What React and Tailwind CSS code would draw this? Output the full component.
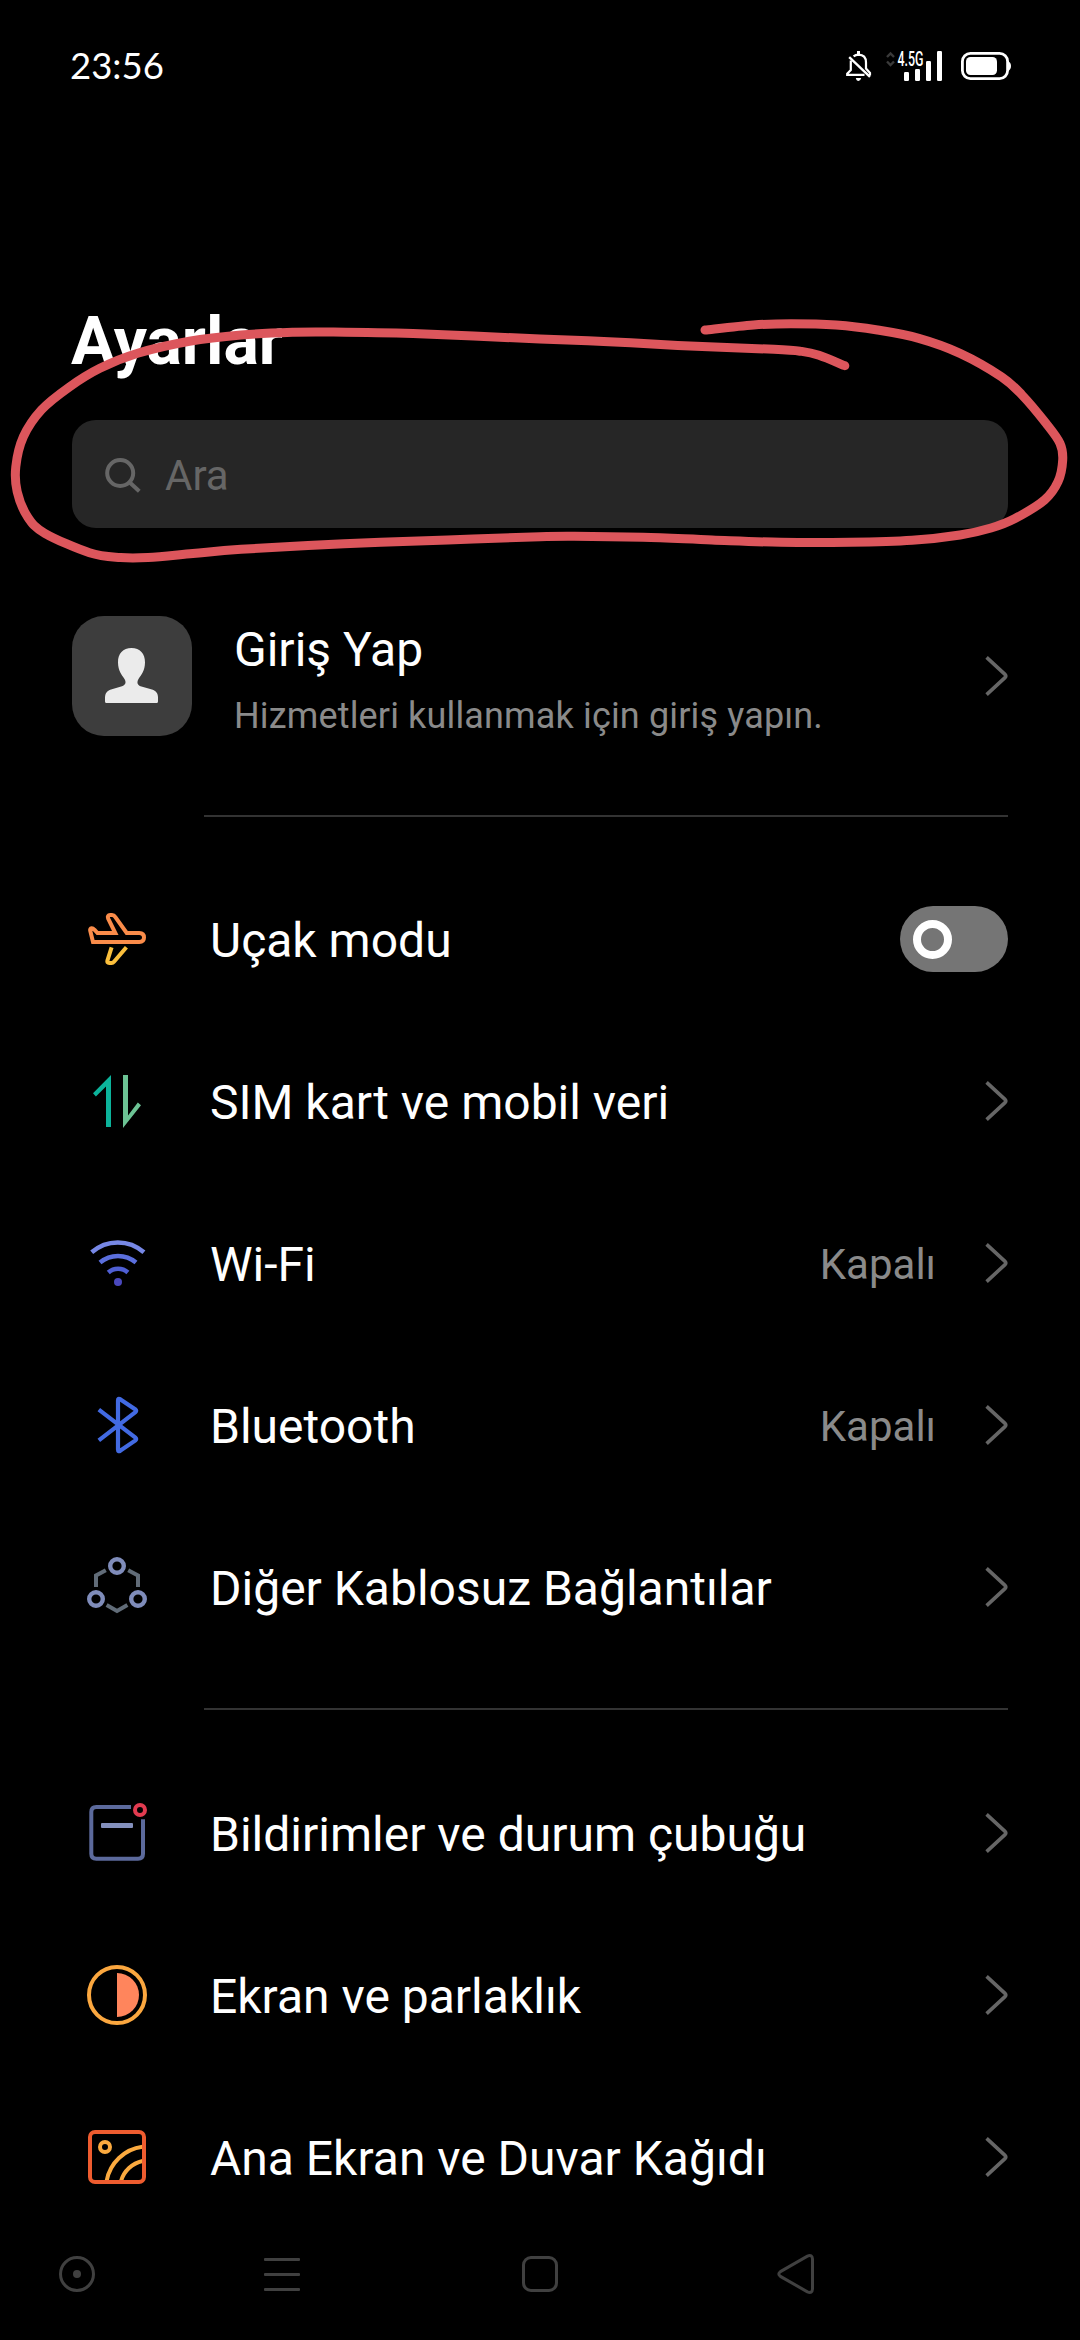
import { useState } from 'react'

// Points of the marker stroke, in drawing order
const markerPoints = [
  [705, 330], [753.5, 325], [791, 323.7], [836, 325], [877.5, 330], [918.8, 338.3], [960, 353.3],
  [1001.4, 376.7], [1022, 395], [1046, 423.3], [1060, 443.3], [1062.7, 460], [1058, 481.7], [1044.5, 500],
  [1015, 518.5], [991, 528], [960, 535], [912, 540.3], [850, 542.3], [781, 542.3], [712, 540], [643, 537.3],
  [574.4, 536.2], [540, 536.7], [447.7, 540], [344, 543.7], [241, 549.3], [192.8, 553.6], [148, 557.5],
  [120.5, 557.5], [89.5, 552.7], [44.8, 533.3], [27.5, 516.7], [17.2, 491.7], [15.8, 466.7], [23.4, 436.7],
  [41.3, 410], [68.9, 387.3], [99.9, 368.3], [137.7, 353.3], [189.4, 341.3], [241, 335], [292.7, 332.3],
  [327, 332], [413, 333.6], [540, 339], [608.9, 341.7], [677.7, 345.4], [774, 349.3], [801.7, 351.4],
  [819, 355.3], [844.8, 365.7],
]

// Catmull-Rom through the points, written as cubic beziers
function smoothPath(pts) {
  let d = `M${pts[0][0]} ${pts[0][1]}`
  for (let i = 0; i < pts.length - 1; i++) {
    const p0 = pts[i - 1] || pts[i]
    const p1 = pts[i]
    const p2 = pts[i + 1]
    const p3 = pts[i + 2] || p2
    d += `C${p1[0] + (p2[0] - p0[0]) / 6} ${p1[1] + (p2[1] - p0[1]) / 6} ${p2[0] - (p3[0] - p1[0]) / 6} ${p2[1] - (p3[1] - p1[1]) / 6} ${p2[0]} ${p2[1]}`
  }
  return d
}

function RowIcon({ children }) {
  return (
    <svg className="w-[60px] h-[60px] shrink-0" viewBox="0 0 60 60" fill="none" strokeWidth="4">
      {children}
    </svg>
  )
}

const AirplaneIcon = () => (
  <RowIcon>
    <path
      d="M6 33L3.2 21.6Q2.8 19.4 4.6 19.2Q6 19.1 7.4 20.7L10.5 24H28.3L21.1 9.4Q20 6.2 23.2 6H25Q27 6 28.2 7.8L39.7 24H52.3Q57 24 57 28.6Q57 33 52.3 33Z"
      stroke="#fa8c4a"
    />
    <path d="M24.6 38.3L20.4 51.6Q19.8 54 22.2 54H24.6Q26 54 27 52.8L39.4 38.3" stroke="#fbbf3c" />
  </RowIcon>
)

const DataIcon = () => (
  <RowIcon>
    <polygon points="24,4 24,56 19,56 19,15.5 8.9,25.6 6,22.3" fill="#0cb39b" />
    <polygon points="36,4 41,4 41,44.5 50.8,31.5 54,34.2 36,57" fill="#6cc394" />
  </RowIcon>
)

const WifiIcon = () => (
  <RowIcon>
    <path d="M4.7 19.3A39.4 39.4 0 0 1 56.9 19.3" stroke="#7788e6" strokeWidth="4.5" />
    <path d="M13 29.5A28 28 0 0 1 49 29.5" stroke="#5b6fdd" strokeWidth="4.5" />
    <path d="M21.3 39.5A14.5 14.5 0 0 1 40.9 39.5" stroke="#4f5fd4" strokeWidth="4.5" />
    <circle cx="31" cy="49" r="4" fill="#4a48bd" />
  </RowIcon>
)

const BluetoothIcon = () => (
  <RowIcon>
    <path
      d="M11.8 14.6L48.4 42.6Q50 44 48.4 45.4L33.2 55.8Q31 57 31 54.6V5.4Q31 3 33.2 4.2L48.4 14.4Q50 15.8 48.4 17.2L11.8 45.4"
      stroke="#426ae2"
      strokeWidth="4.2"
    />
  </RowIcon>
)

const ConnectionsIcon = () => (
  <RowIcon>
    <path d="M18.8 13.2L9 18.4V30M41.2 13.2L51 18.4V30M19.6 48L30 54L40.4 48" stroke="#616c78" />
    <g stroke="#7f8cba" strokeWidth="4.4">
      <circle cx="30" cy="9" r="6.8" />
      <circle cx="9" cy="42" r="6.8" />
      <circle cx="51" cy="42" r="6.8" />
    </g>
  </RowIcon>
)

const NotificationIcon = () => (
  <RowIcon>
    <path d="M44 4H9.3Q4.3 4 4.3 9V50.7Q4.3 55.7 9.3 55.7H51Q56 55.7 56 50.7V16.3" stroke="#5c6a9c" />
    <rect x="14" y="20" width="32" height="5" rx="1" fill="#8490bd" />
    <circle cx="53" cy="7" r="5" stroke="#e23b50" />
  </RowIcon>
)

const BrightnessIcon = () => (
  <RowIcon>
    <circle cx="30" cy="30" r="28" stroke="#fba73f" />
    <path d="M30 8A22 22 0 0 1 30 52Z" fill="#ff855c" />
  </RowIcon>
)

const WallpaperIcon = () => (
  <RowIcon>
    <path d="M19.6 54A42 42 0 0 1 55.5 19.8M34 54A29 29 0 0 1 55.5 34" stroke="#fbaa3f" />
    <circle cx="18" cy="20" r="5" stroke="#fbaa3f" />
    <rect x="3" y="5" width="54" height="50" rx="5" stroke="#ee5c2f" />
  </RowIcon>
)

const Chevron = () => (
  <svg className="w-6 h-[42px] shrink-0" viewBox="0 0 24 42" fill="none">
    <path d="M2.6 2.4L21 19.4Q22.7 21 21 22.6L2.6 39.6" stroke="#666666" strokeWidth="3.6" />
  </svg>
)

function Toggle() {
  const [on, setOn] = useState(false)
  return (
    <button
      onClick={() => setOn(!on)}
      className={`flex items-center w-[108px] h-[66px] rounded-full bg-[#757575] px-[13px] ${on ? 'justify-end' : 'justify-start'}`}
    >
      <span className="w-[39px] h-[39px] rounded-full border-8 border-white" />
    </button>
  )
}

function Row({ icon: Icon, label, value, toggle }) {
  return (
    <div className="flex items-center h-[162px] pl-[87px] pr-[72px]">
      <Icon />
      <span className="ml-[63px] pt-[3px] flex-1 text-5xl leading-[56px] whitespace-nowrap">{label}</span>
      {value && <span className="mr-12 pt-[3px] text-[42px] leading-[50px] text-[#8a8a8a]">{value}</span>}
      {toggle ? <Toggle /> : <Chevron />}
    </div>
  )
}

const Divider = () => <div className="ml-[204px] mr-[72px] h-0.5 shrink-0 bg-[#333333]" />

const connectionRows = [
  { icon: AirplaneIcon, label: 'Uçak modu', toggle: true },
  { icon: DataIcon, label: 'SIM kart ve mobil veri' },
  { icon: WifiIcon, label: 'Wi-Fi', value: 'Kapalı' },
  { icon: BluetoothIcon, label: 'Bluetooth', value: 'Kapalı' },
  { icon: ConnectionsIcon, label: 'Diğer Kablosuz Bağlantılar' },
]

const displayRows = [
  { icon: NotificationIcon, label: 'Bildirimler ve durum çubuğu' },
  { icon: BrightnessIcon, label: 'Ekran ve parlaklık' },
  { icon: WallpaperIcon, label: 'Ana Ekran ve Duvar Kağıdı' },
]

function StatusBar() {
  return (
    <header className="flex items-center h-[132px] shrink-0 pl-[70px] pr-[69px]">
      <span className="flex-1 pb-0.5 font-['Lato',sans-serif] text-[36.500px] leading-[44px]">23:56</span>
      <svg className="w-[26px] h-[30px]" viewBox="0 0 26 30" fill="none" stroke="#fff" strokeWidth="2.2">
        <path d="M7.6 5.4Q9.6 3.6 12.5 3.6Q20 3.8 20 11.5V17.5L24 22V24.6M4.8 9.5V19L1.2 22.6V23.8H18.5" />
        <path d="M3.2 6.2L24 25.8" strokeWidth="2.4" />
        <path d="M12.5 0V4" strokeWidth="3" />
        <path d="M9.8 27H15.2Q14.6 30 12.5 30Q10.4 30 9.8 27Z" fill="#fff" stroke="none" />
      </svg>
      <svg className="ml-3.5 w-14 h-[42px]" viewBox="0 -6 56 42">
        <path d="M1 6L4.5 2.4L8 6M1 10.5L4.5 14L8 10.5" fill="none" stroke="#3a3a3a" strokeWidth="2.4" />
        <text x="11.5" y="15" textLength="26" lengthAdjust="spacingAndGlyphs" className="font-['Roboto',sans-serif] text-[19.500px] font-medium" fill="#fff">
          4.5G
        </text>
        <g fill="#fff">
          <rect x="18" y="21" width="5" height="9" rx="1.2" />
          <rect x="29" y="18" width="5" height="12" rx="1.2" />
          <rect x="40" y="10" width="5" height="20" rx="1.2" />
          <rect x="51" y="0" width="5" height="30" rx="1.2" />
        </g>
      </svg>
      <svg className="ml-[19px] w-[50px] h-7" viewBox="0 0 50 28">
        <rect x="1.4" y="1.4" width="45.2" height="25.2" rx="8" fill="none" stroke="#fff" strokeWidth="2.8" />
        <rect x="5" y="5" width="31" height="18" rx="4.5" fill="#fff" />
        <path d="M47 9Q50 10.5 50 14Q50 17.5 47 19Z" fill="#fff" />
      </svg>
    </header>
  )
}

function NavBar() {
  return (
    <nav className="flex items-center h-[72px] pl-[59px]">
      <svg className="w-9 h-9" viewBox="0 0 36 36" fill="none">
        <circle cx="18" cy="18" r="16.5" stroke="#404040" strokeWidth="3" />
        <circle cx="18" cy="18" r="4" fill="#404040" />
      </svg>
      <svg className="ml-[169px] w-9 h-9" viewBox="0 0 36 36" fill="#404040">
        <rect y="2" width="36" height="3" rx="1" />
        <rect y="17" width="36" height="3" rx="1" />
        <rect y="32" width="36" height="3" rx="1" />
      </svg>
      <span className="ml-[222px] w-9 h-9 rounded-[9px] border-3 border-[#404040]" />
      <svg className="ml-[219px] w-[38px] h-10" viewBox="0 0 38 40" fill="none">
        <path
          d="M3.4 17.6L30.4 2.2Q35.3 0.2 35.5 5V35Q35.3 39.8 30.4 37.8L3.4 22.4Q0.2 20 3.4 17.6Z"
          stroke="#404040"
          strokeWidth="3"
        />
      </svg>
    </nav>
  )
}

export default function App() {
  return (
    <div className="relative flex flex-col w-[1080px] h-[2340px] overflow-hidden bg-black text-white font-['Roboto',sans-serif]">
      <StatusBar />

      <h1 className="mt-[168px] ml-[71px] h-[84px] shrink-0 text-[66px] leading-[84px] font-bold">Ayarlar</h1>

      <div className="mt-9 mx-[72px] flex items-center h-[108px] shrink-0 rounded-3xl bg-[#262626] pl-8">
        <svg className="w-10 h-10" viewBox="0 0 40 40" fill="none" stroke="#666666" strokeWidth="4">
          <circle cx="16.2" cy="19" r="13" />
          <path d="M25.5 28.2L35.3 37.3" />
        </svg>
        <span className="ml-[21px] pt-[3px] text-[42px] leading-[50px] text-[#666666]">Ara</span>
      </div>

      <section className="mt-[88px] flex items-center h-[120px] shrink-0 pl-[72px] pr-[72px]">
        <div className="w-[120px] h-[120px] rounded-[32px] bg-[#3d3d3d]">
          <svg className="w-[120px] h-[120px]" viewBox="0 0 120 120" fill="#ebebeb">
            <path d="M59.5 32C68 32 73.2 37.5 73 46.5C72.8 55 69.5 58.5 66.5 63C64.5 66.5 65.5 69 68.5 70.3L80 73.4C84 74.6 86 77.5 86 81.5V85.5Q86 87 84.5 87H34.5Q33 87 33 85.5V81.5C33 77.5 35 74.6 39 73.4L50 70.3C53.5 69 54.5 66.5 52.5 63C49.5 58.5 46.2 55 46 46.5C45.8 37.5 51 32 59.5 32Z" />
          </svg>
        </div>
        <div className="ml-[42px] pt-[11px] flex-1">
          <p className="text-5xl leading-[66px]">Giriş Yap</p>
          <p className="pt-[3px] text-4xl leading-[60px] tracking-[0.15px] text-[#8a8a8a]">
            Hizmetleri kullanmak için giriş yapın.
          </p>
        </div>
        <Chevron />
      </section>

      <div className="h-[79px] shrink-0" />
      <Divider />
      <div className="pt-[41px] pb-10">
        {connectionRows.map((row) => (
          <Row key={row.label} {...row} />
        ))}
      </div>
      <Divider />
      <div className="pt-[42px]">
        {displayRows.map((row) => (
          <Row key={row.label} {...row} />
        ))}
      </div>
      <NavBar />

      {/* Marker drawn over the search area */}
      <svg className="absolute inset-0 w-[1080px] h-[2340px] pointer-events-none" viewBox="0 0 1080 2340" fill="none">
        <path d={smoothPath(markerPoints)} stroke="#dc565c" strokeWidth="9" strokeLinecap="round" strokeLinejoin="round" />
      </svg>
    </div>
  )
}
